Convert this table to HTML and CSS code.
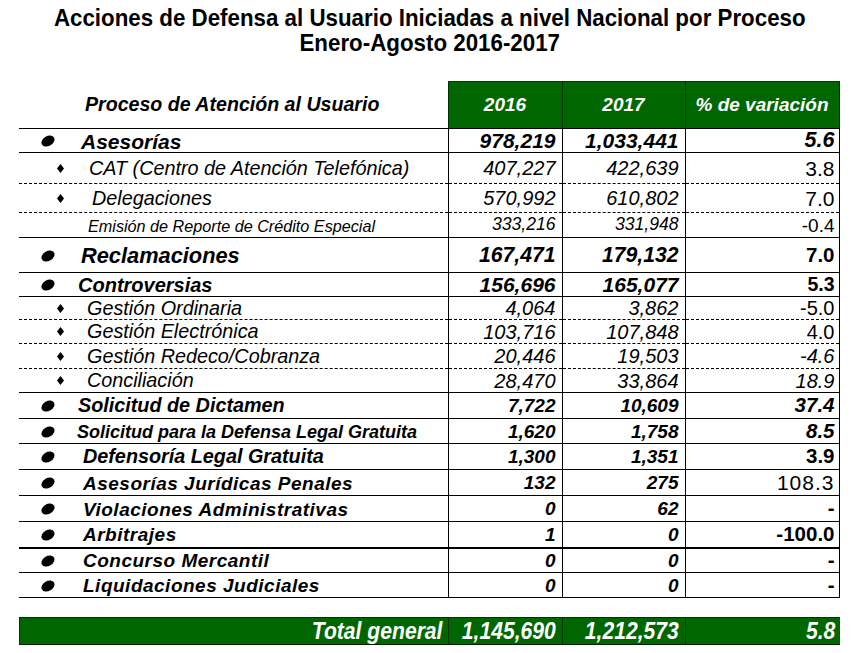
FILE: index.html
```html
<!DOCTYPE html>
<html lang="es">
<head>
<meta charset="utf-8">
<title>Acciones de Defensa al Usuario</title>
<link rel="stylesheet" href="styles.css">
</head>
<body>
<div class="page">
  <h1 class="title">Acciones de Defensa al Usuario Iniciadas a nivel Nacional por Proceso<br>Enero-Agosto 2016-2017</h1>

  <table class="grid">
    <colgroup>
      <col class="c-label"><col class="c-y1"><col class="c-y2"><col class="c-var">
    </colgroup>
    <thead>
      <tr class="head">
        <th class="h-label">Proceso de Atención al Usuario</th>
        <th class="h-green">2016</th>
        <th class="h-green">2017</th>
        <th class="h-green">% de variación</th>
      </tr>
    </thead>
    <tbody>
      <tr class="r r-a solid">
        <td class="lab"><span class="dot"></span><span class="t">Asesorías</span></td>
        <td class="num bi">978,219</td><td class="num bi">1,033,441</td><td class="num bi v">5.6</td>
      </tr>
      <tr class="r r-cat dash">
        <td class="lab"><span class="dia"></span><span class="t">CAT (Centro de Atención Telefónica)</span></td>
        <td class="num i">407,227</td><td class="num i">422,639</td><td class="num up v">3.8</td>
      </tr>
      <tr class="r r-del dash">
        <td class="lab"><span class="dia"></span><span class="t t-del">Delegaciones</span></td>
        <td class="num i">570,992</td><td class="num i">610,802</td><td class="num up v">7.0</td>
      </tr>
      <tr class="r r-emi solid">
        <td class="lab"><span class="blank"></span><span class="t t-emi">Emisión de Reporte de Crédito Especial</span></td>
        <td class="num i">333,216</td><td class="num i">331,948</td><td class="num up v">-0.4</td>
      </tr>
      <tr class="r r-rec solid">
        <td class="lab"><span class="dot"></span><span class="t">Reclamaciones</span></td>
        <td class="num bi">167,471</td><td class="num bi">179,132</td><td class="num bu v">7.0</td>
      </tr>
      <tr class="r r-con solid">
        <td class="lab"><span class="dot"></span><span class="t t-con">Controversias</span></td>
        <td class="num bi">156,696</td><td class="num bi">165,077</td><td class="num bu v">5.3</td>
      </tr>
      <tr class="r r-g r-g1 dash">
        <td class="lab"><span class="dia"></span><span class="t t-g">Gestión Ordinaria</span></td>
        <td class="num i">4,064</td><td class="num i">3,862</td><td class="num up v">-5.0</td>
      </tr>
      <tr class="r r-g r-g2 dash">
        <td class="lab"><span class="dia"></span><span class="t t-g">Gestión Electrónica</span></td>
        <td class="num i">103,716</td><td class="num i">107,848</td><td class="num up v">4.0</td>
      </tr>
      <tr class="r r-g r-g3 dash">
        <td class="lab"><span class="dia"></span><span class="t t-g">Gestión Redeco/Cobranza</span></td>
        <td class="num i">20,446</td><td class="num i">19,503</td><td class="num i v">-4.6</td>
      </tr>
      <tr class="r r-g r-g4 solid">
        <td class="lab"><span class="dia"></span><span class="t t-g">Conciliación</span></td>
        <td class="num i">28,470</td><td class="num i">33,864</td><td class="num i v">18.9</td>
      </tr>
      <tr class="r r-low r-m solid">
        <td class="lab l-dic"><span class="dot"></span><span class="t t-con">Solicitud de Dictamen</span></td>
        <td class="num bi">7,722</td><td class="num bi">10,609</td><td class="num bi v">37.4</td>
      </tr>
      <tr class="r r-low r-m2 solid">
        <td class="lab l-sol"><span class="dot"></span><span class="t t-sol">Solicitud para la Defensa Legal Gratuita</span></td>
        <td class="num bi">1,620</td><td class="num bi">1,758</td><td class="num bi v">8.5</td>
      </tr>
      <tr class="r r-low r-m solid">
        <td class="lab l-dic"><span class="dot"></span><span class="t t-def">Defensoría Legal Gratuita</span></td>
        <td class="num bi">1,300</td><td class="num bi">1,351</td><td class="num bu v">3.9</td>
      </tr>
      <tr class="r r-low r-m solid">
        <td class="lab l-wide"><span class="dot"></span><span class="t t-def">Asesorías Jurídicas Penales</span></td>
        <td class="num bi">132</td><td class="num bi">275</td><td class="num up v v-wide">108.3</td>
      </tr>
      <tr class="r r-low r-m solid">
        <td class="lab l-wide"><span class="dot"></span><span class="t t-def">Violaciones Administrativas</span></td>
        <td class="num bi">0</td><td class="num bi">62</td><td class="num bu v">-</td>
      </tr>
      <tr class="r r-low r-m thick">
        <td class="lab l-wide"><span class="dot"></span><span class="t t-def">Arbitrajes</span></td>
        <td class="num bi">1</td><td class="num bi">0</td><td class="num bu v">-100.0</td>
      </tr>
      <tr class="r r-low r-m2 solid">
        <td class="lab l-wide"><span class="dot"></span><span class="t t-def">Concurso Mercantil</span></td>
        <td class="num bi">0</td><td class="num bi">0</td><td class="num bu v">-</td>
      </tr>
      <tr class="r r-low r-m2 solid">
        <td class="lab l-wide"><span class="dot"></span><span class="t t-def">Liquidaciones Judiciales</span></td>
        <td class="num bi">0</td><td class="num bi">0</td><td class="num bu v">-</td>
      </tr>
    </tbody>
  </table>

  <table class="grid total">
    <colgroup>
      <col class="c-label"><col class="c-y1"><col class="c-y2"><col class="c-var">
    </colgroup>
    <tbody>
      <tr class="tot">
        <td><span class="squeeze">Total general</span></td>
        <td><span class="squeeze">1,145,690</span></td>
        <td><span class="squeeze">1,212,573</span></td>
        <td><span class="squeeze">5.8</span></td>
      </tr>
    </tbody>
  </table>
</div>
</body>
</html>
```

FILE: styles.css
```css
html, body {
  margin: 0;
  padding: 0;
  background: #ffffff;
}

body {
  font-family: "Liberation Sans", Arial, sans-serif;
  color: #000;
}

.page {
  width: 859px;
  height: 653px;
  overflow: hidden;
}

.title {
  margin: 0;
  padding-top: 5px;
  height: 81px;
  box-sizing: border-box;
  text-align: center;
  font-weight: bold;
  font-size: 24px;
  line-height: 25px;
  transform: scaleX(0.93);
  transform-origin: 433px 0;
}

.grid {
  margin-left: 19px;
  width: 820px;
  border-collapse: collapse;
  table-layout: fixed;
}

.c-label { width: 429px; }
.c-y1 { width: 114px; }
.c-y2 { width: 123px; }
.c-var { width: 154px; }

.head th {
  height: 46px;
  padding: 0;
  font-style: italic;
  font-weight: bold;
  font-size: 19px;
  border-bottom: 1px solid #000;
}

.h-label {
  text-align: left;
  padding-left: 66px !important;
  font-size: 19.6px !important;
}

.h-green {
  background: #006600;
  color: #fff;
  border-left: 1px solid #003300;
  border-right: 1px solid #003300;
  border-top: 1px solid #004400;
  text-align: center;
}

td {
  padding: 0;
  vertical-align: middle;
  white-space: nowrap;
  overflow: hidden;
  line-height: 1;
}

.r td.num {
  border-left: 1px solid #000;
  border-right: 1px solid #000;
  text-align: right;
  padding-right: 6px;
}

.r td.num.v {
  padding-right: 4px;
}

.solid td { border-bottom: 1px solid #000; }
.dash td { border-bottom: 1px dashed #000; }
.thick td { border-bottom: 2px solid #000; }

/* row heights */
.r-a { height: 24px; }
.r-cat { height: 31px; }
.r-del { height: 29px; }
.r-emi { height: 25px; }
.r-rec { height: 35px; }
.r-con { height: 24px; }
.r-g1 { height: 23px; }
.r-g2 { height: 24px; }
.r-g3 { height: 25px; }
.r-g4 { height: 24px; }
.r-m { height: 26px; }
.r-m2 { height: 25px; }

/* label cell */
.lab {
  font-style: italic;
  font-weight: bold;
}

.lab > span { display: inline-block; vertical-align: middle; }

.dot {
  width: 14px;
  height: 10px;
  margin-left: 22px;
  margin-right: 26px;
  background: #000;
  border-radius: 50%;
  transform: rotate(-30deg);
}

.dia {
  width: 5px;
  height: 5px;
  margin-left: 39px;
  margin-right: 26px;
  background: #000;
  transform: scaleY(1.25) rotate(45deg);
}

.blank { width: 69px; }

.t-del { margin-left: 3px; }
.t-con { margin-left: -3px; }
.t-g { margin-left: -2px; }
.t-sol { margin-left: -4px; }
.t-def { margin-left: 2px; }

/* number styles */
.num.bi { font-weight: bold; font-style: italic; }
.num.i { font-style: italic; }
.num.up { font-style: normal; }
.num.bu { font-weight: bold; font-style: normal; }

/* per-row sizes */
.r-a .lab { font-size: 21px; }
.r-a .num { font-size: 21px; }
.r-a .num.v { font-size: 21.5px; }

.r-cat .lab, .r-del .lab { font-weight: normal; font-size: 19.8px; }
.r-cat .num, .r-del .num { font-size: 20px; }
.r-cat .num.v, .r-del .num.v { font-size: 21px; }

.r-emi .lab { font-weight: normal; font-size: 16.2px; }
.r-emi .num { font-size: 17.6px; }
.r-emi .num.v { font-size: 19px; }

.r-rec .lab { font-size: 21.8px; }
.r-rec .num { font-size: 21.2px; }
.r-rec .num.v { font-size: 20.5px; }

.r-con .lab { font-size: 20px; }
.r-con .num { font-size: 21px; }
.r-con .num.v { font-size: 19.5px; }

.r-g .lab { font-weight: normal; font-size: 19.8px; }
.r-g .num { font-size: 20px; }
.r-g .num.v { font-size: 20px; }

.r-low .num { font-size: 19px; }
.r-low .num.v { font-size: 20.5px; }
.r-low .num.v-wide { font-size: 21px; letter-spacing: 1px; }

.l-dic { font-size: 19.8px; }
.l-sol { font-size: 18px; }
.l-wide { font-size: 19px; letter-spacing: 0.5px; }

/* total row */
.total {
  margin-top: 19px;
}

.tot td {
  height: 26px;
  padding: 0 6px 0 0;
  background: #006600;
  color: #fff;
  font-weight: bold;
  font-style: italic;
  font-size: 24px;
  line-height: 1;
  text-align: right;
  border-top: 1px solid #003300;
  border-bottom: 1px solid #002200;
  border-left: 1px solid #003300;
  overflow: visible;
}

.tot td:last-child { padding-right: 4px; }

.squeeze {
  display: inline-block;
  transform: scaleX(0.88);
  transform-origin: 100% 50%;
}
```
